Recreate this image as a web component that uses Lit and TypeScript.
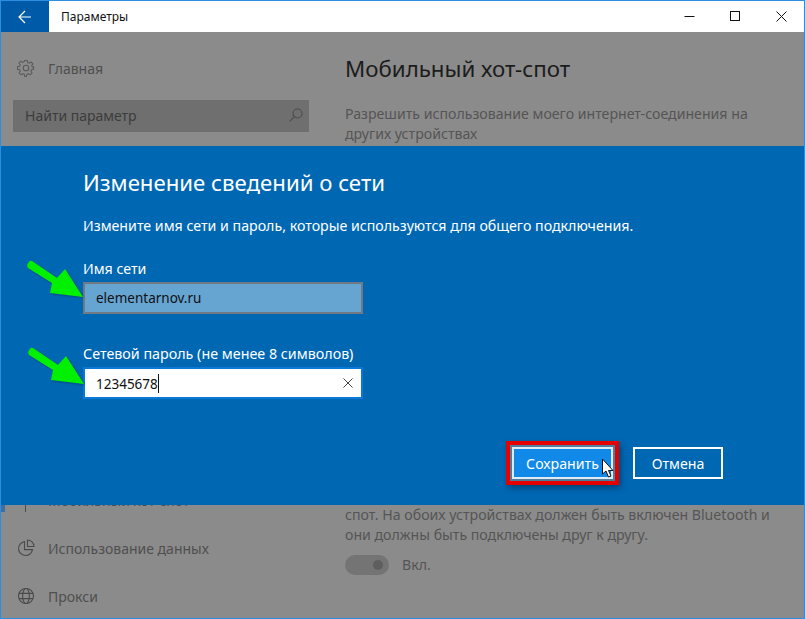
import { LitElement, html, css, svg } from "lit";
import { customElement } from "lit/decorators.js";

const arrow = svg`<path d="M6 2 L31 19 L39 10 L57 38 L24 34 L26 24 L2 9 Q0 6 3 3 Q4 1 6 2Z" fill="#00f000"/>`;

@customElement("app-root")
export class AppRoot extends LitElement {
  static styles = css`
    :host { display: block; width: 805px; height: 619px; font-family: "Noto Sans", "Open Sans", sans-serif; }
    .win { position: relative; box-sizing: border-box; width: 805px; height: 619px; border: 1px solid #2a8fe0; display: flex; flex-direction: column; overflow: hidden; background: #8b8b8b; }
    .title { flex: none; height: 31px; background: #fff; display: flex; align-items: center; }
    .back { width: 48px; height: 31px; background: #005aa8; display: flex; align-items: center; justify-content: center; }
    .tname { margin-left: 12px; font-size: 12px; color: #111; }
    .ctrls { margin-left: auto; display: flex; }
    .ctrl { width: 46px; height: 31px; display: flex; align-items: center; justify-content: center; }
    .band { display: grid; grid-template-columns: 344px 1fr; background: #8b8b8b; overflow: hidden; }
    .top { flex: none; height: 114px; }
    .bottom { flex: 1; min-height: 0; }
    .side { padding-left: 12px; color: #4d4d4d; }
    .nav { display: flex; align-items: center; gap: 13px; padding-left: 4px; font-size: 14px; color: #4f4f4f; height: 24px; }
    .top .nav { margin-top: 24px; }
    .search { margin-top: 20px; width: 296px; height: 32px; background: #6f6f6f; display: flex; align-items: center; justify-content: space-between; box-sizing: border-box; padding: 0 6px 2px 12px; font-size: 14px; color: #3c3c3c; }
    .main { color: #555; font-size: 14.15px; line-height: 20px; }
    h1 { margin: 21px 0 0; font-size: 22.3px; line-height: 32px; font-weight: 400; color: #1c1c1c; }
    .top p { margin: 19px 0 0; width: 420px; }
    .dialog { flex: none; height: 359px; background: #0067b3; color: #fff; padding: 0 0 0 82px; box-sizing: border-box; display: flex; flex-direction: column; }
    h2 { margin: 20px 0 0; font-size: 22.2px; line-height: 34px; font-weight: 400; }
    .desc { margin: 16px 0 0; font-size: 14.2px; line-height: 20px; }
    .label { font-size: 14.2px; line-height: 20px; }
    .l1 { margin-top: 23px; }
    .l2 { margin-top: 30px; font-size: 14.3px; }
    .in { width: 280px; height: 32px; box-sizing: border-box; display: flex; align-items: center; justify-content: space-between; padding: 0 8px 0 11px; font-size: 13.5px; color: #111; margin-top: 3px; }
    .in1 { background: #66a4d2; border: 2px solid #717a83; }
    .in2 { background: #fff; border: 2px solid #0a78d7; }
    .caret { display: inline-block; width: 1px; height: 19px; background: #111; vertical-align: -4px; }
    .btns { display: flex; gap: 20px; margin: 48px 0 0 429px; }
    .btn { box-sizing: border-box; width: 90px; height: 32px; padding-top: 1px; border: 2px solid #fff; color: #fff; font-size: 14.2px; display: flex; align-items: center; justify-content: center; }
    .save { width: 101px; background: #1089e8; border-color: #dfeaf2; box-shadow: 0 0 0 2px #4f7d9e, 0 0 0 6px #e50000, 2px 3px 6px 6px rgba(0,0,0,.35); }
    .clip { margin-top: -17px; margin-bottom: 24px; position: relative; }
    .mark { position: absolute; left: -12px; top: 4px; width: 4px; height: 20px; background: #3d6fa3; }
    .n1 { margin-top: 24px; }
    .bottom p { margin: 0; width: 445px; }
    .toggle { display: flex; align-items: center; gap: 13px; margin-top: 9px; color: #555; line-height: 22px; }
    .sw { width: 44px; height: 20px; border-radius: 10px; background: #747474; position: relative; }
    .knob { position: absolute; right: 6px; top: 5px; width: 10px; height: 10px; border-radius: 50%; background: #5e5e5e; }
    .ov { position: absolute; pointer-events: none; }
    .arrow { filter: drop-shadow(1px 1px 1px rgba(0,0,0,.3)); }
    .a1 { left: 25px; top: 258px; }
    .a2 { left: 26px; top: 345px; }
    .cur { left: 600px; top: 457px; }
  `;

  render() {
    return html`<div class="win">
      <div class="title">
        <div class="back"><svg width="14" height="14" viewBox="0 0 14 14" fill="none" stroke="#fff" stroke-width="1.2"><path d="M1 7H13M7 1 1 7l6 6"/></svg></div>
        <div class="tname">Параметры</div>
        <div class="ctrls">
          <div class="ctrl"><svg width="12" height="12"><path d="M1.5 5.5H11.5" stroke="#111"/></svg></div>
          <div class="ctrl"><svg width="12" height="12" fill="none"><rect x="1.5" y=".5" width="9" height="9" stroke="#111"/></svg></div>
          <div class="ctrl"><svg width="12" height="12" fill="none"><path d="M1.5.5l10 10M11.5.5l-10 10" stroke="#111"/></svg></div>
        </div>
      </div>
      <div class="band top">
        <div class="side">
          <div class="nav"><svg width="18" height="18" viewBox="0 0 18 18" fill="none" stroke="#5a5a5a" stroke-width="1.1"><circle cx="9" cy="9" r="2.8"/><path d="M7.6 1h2.8l.4 2.2 1.6.7 1.9-1.3 2 2-1.3 1.9.7 1.6L17 7.6v2.8l-2.2.4-.7 1.6 1.3 1.9-2 2-1.9-1.3-1.6.7-.5 2.2H7.6l-.4-2.2-1.6-.7-1.9 1.3-2-2 1.3-1.9-.7-1.6L0 10.4V7.6l2.2-.4.7-1.6L1.6 3.7l2-2 1.9 1.3 1.6-.7z" transform="translate(.5 .5) scale(.945)"/></svg><span>Главная</span></div>
          <div class="search"><span>Найти параметр</span><svg width="14" height="14" viewBox="0 0 14 14" fill="none" stroke="#4c4c4c" stroke-width="1.1"><circle cx="8.5" cy="5.5" r="4.5"/><path d="M5.3 8.7.7 13.3"/></svg></div>
        </div>
        <div class="main">
          <h1>Мобильный хот-спот</h1>
          <p>Разрешить использование моего интернет-соединения на других устройствах</p>
        </div>
      </div>
      <div class="dialog">
        <h2>Изменение сведений о сети</h2>
        <div class="desc">Измените имя сети и пароль, которые используются для общего подключения.</div>
        <div class="label l1">Имя сети</div>
        <div class="in in1"><span>elementarnov.ru</span></div>
        <div class="label l2">Сетевой пароль (не менее 8 символов)</div>
        <div class="in in2"><span>12345678<span class="caret"></span></span><svg width="10" height="10" fill="none"><path d="M.5.5l9 9M9.5.5l-9 9" stroke="#444"/></svg></div>
        <div class="btns"><div class="btn save">Сохранить</div><div class="btn">Отмена</div></div>
      </div>
      <div class="band bottom">
        <div class="side">
          <div class="nav clip"><span class="mark"></span><svg width="18" height="24"><path d="M8.500 10V24" stroke="#4a4a4a"/></svg><span>Мобильный хот-спот</span></div>
          <div class="nav"><svg width="18" height="18" viewBox="0 0 18 18" fill="none" stroke="#4a4a4a" stroke-width="1.1"><path d="M7.5 2.6a7 7 0 1 0 8 8h-8z"/><path d="M10.5 1a6.5 6.5 0 0 1 6.5 6.5h-6.5z"/></svg><span>Использование данных</span></div>
          <div class="nav n1"><svg width="18" height="18" viewBox="0 0 18 18" fill="none" stroke="#4a4a4a" stroke-width="1.1"><circle cx="9" cy="9" r="7.5"/><ellipse cx="9" cy="9" rx="3.4" ry="7.5"/><path d="M2 6.4h14M2 11.6h14"/></svg><span>Прокси</span></div>
        </div>
        <div class="main">
          <p>спот. На обоих устройствах должен быть включен Bluetooth и они должны быть подключены друг к другу.</p>
          <div class="toggle"><div class="sw"><div class="knob"></div></div><span>Вкл.</span></div>
        </div>
      </div>
      <svg class="ov arrow a1" width="58" height="40" viewBox="0 0 58 40">${arrow}</svg>
      <svg class="ov arrow a2" width="58" height="40" viewBox="0 0 58 40">${arrow}</svg>
      <svg class="ov cur" width="14" height="21" viewBox="0 0 14 21"><path d="M1.500 1v15l3.500-3 2.500 6 2.500-1-2.500-5.500h4.500z" fill="#fff" stroke="#111" stroke-width="1"/></svg>
    </div>`;
  }
}
